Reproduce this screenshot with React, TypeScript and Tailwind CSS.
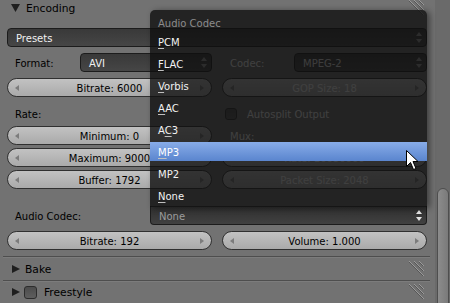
import React from 'react'

function ArrowL() {
  return (
    <svg width="4" height="6" viewBox="0 0 4 6" className="shrink-0">
      <path d="M4 0L0 3L4 6Z" fill="#7c7c7c" />
    </svg>
  )
}

function ArrowR() {
  return (
    <svg width="4" height="6" viewBox="0 0 4 6" className="shrink-0">
      <path d="M0 0L4 3L0 6Z" fill="#7c7c7c" />
    </svg>
  )
}

function UpDown({ color }: { color: string }) {
  return (
    <svg width="6" height="11" viewBox="0 0 6 11" className="shrink-0">
      <path d="M3 0L6 4H0Z M0 7H6L3 11Z" fill={color} />
    </svg>
  )
}

function TriDown() {
  return (
    <svg width="9" height="8" viewBox="0 0 9 8" className="shrink-0">
      <path d="M0 0H9L4.5 8Z" fill="#1f1f1f" />
    </svg>
  )
}

function TriRight() {
  return (
    <svg width="8" height="8" viewBox="0 0 8 8" className="shrink-0">
      <path d="M0 0L8 4L0 8Z" fill="#1f1f1f" />
    </svg>
  )
}

// panel drag handle
function Hatch() {
  return (
    <svg width="16" height="16" viewBox="0 0 16 16" className="ml-auto mr-[2px] shrink-0">
      <g strokeWidth="1">
        <path d="M0 0L15 15M5 0L15 10M10 0L15 5" stroke="#9a9a9a" />
        <path d="M0 1L14 15M5 1L14 10M10 1L14 5" stroke="#565656" />
      </g>
    </svg>
  )
}

function Slider({ text, light }: { text: string; light?: boolean }) {
  return (
    <div className="flex h-[19px] items-center rounded-full border border-[#303030] bg-gradient-to-b from-[#c2c2c2] to-[#aaaaaa] px-[7px]">
      <ArrowL />
      <span className={`flex-1 pt-[3px] text-center ${light ? 'text-white' : 'text-black'}`}>{text}</span>
      <ArrowR />
    </div>
  )
}

function Dropdown({ text }: { text: string }) {
  return (
    <div className="flex h-[19px] flex-1 items-center rounded-[4px] border border-[#1c1c1c] bg-gradient-to-b from-[#393939] to-[#464646] pl-[8px] pr-[4px] text-[#f0f0f0]">
      <span className="flex-1 pt-[3px]">{text}</span>
      <UpDown color="#a0a0a0" />
    </div>
  )
}

function Label({ text, light }: { text: string; light?: boolean }) {
  return (
    <div className={`flex h-[19px] items-center pl-[8px] ${light ? 'text-white' : 'text-black'}`}>
      <span className="pt-[3px]">{text}</span>
    </div>
  )
}

const codecs: [string, number][] = [
  ['PCM', 0],
  ['FLAC', 0],
  ['Vorbis', 0],
  ['AAC', 0],
  ['AC3', 1],
  ['MP3', 0],
  ['MP2', -1],
  ['None', 0],
]

export default function App() {
  return (
    <div className="relative flex h-[303px] w-[450px] overflow-hidden bg-[#727272] font-['DejaVu_Sans',sans-serif] text-[10px] leading-none text-black">
      <div className="flex w-[435px] flex-col pl-[7px]">
        {/* Encoding header */}
        <div className="-mt-[3px] flex h-[22px] w-[420px] items-center text-[10.7px]">
          <span className="ml-[4px]"><TriDown /></span>
          <span className="ml-[6px] pt-[3px]">Encoding</span>
          <Hatch />
        </div>

        <div className="mt-[10px] flex w-[420px]">
          <Dropdown text="Presets" />
        </div>

        <div className="mt-[6px] flex w-[420px] gap-[10px]">
          <div className="flex w-[205px] items-center">
            <div className="w-[73px]"><Label text="Format:" /></div>
            <Dropdown text="AVI" />
          </div>
          <div className="flex w-[205px] items-center">
            <div className="w-[72px]"><Label text="Codec:" light /></div>
            <Dropdown text="MPEG-2" />
          </div>
        </div>

        <div className="mt-[6px] flex w-[420px] gap-[10px]">
          <div className="w-[205px]"><Slider text="Bitrate: 6000" /></div>
          <div className="w-[205px]"><Slider text="GOP Size: 18" light /></div>
        </div>

        <div className="mt-[7px] flex w-[420px] gap-[10px]">
          <div className="w-[205px]"><Label text="Rate:" /></div>
          <div className="flex h-[19px] w-[205px] items-center pl-[3px]">
            <div className="h-[12px] w-[12px] rounded-[3px] border border-[#303030] bg-gradient-to-b from-[#4e4e4e] to-[#5c5c5c]" />
            <span className="ml-[10px] pt-[3px] text-white">Autosplit Output</span>
          </div>
        </div>

        <div className="mt-[3px] flex w-[420px] gap-[10px]">
          <div className="w-[205px]"><Slider text="Minimum: 0" /></div>
          <div className="w-[205px]"><Label text="Mux:" light /></div>
        </div>

        <div className="mt-[3px] flex w-[420px] gap-[10px]">
          <div className="w-[205px]"><Slider text="Maximum: 9000" /></div>
          <div className="w-[205px]"><Slider text="Rate: 10080000" light /></div>
        </div>

        <div className="mt-[3px] flex w-[420px] gap-[10px]">
          <div className="w-[205px]"><Slider text="Buffer: 1792" /></div>
          <div className="w-[205px]"><Slider text="Packet Size: 2048" light /></div>
        </div>

        {/* Audio codec */}
        <div className="mt-[17px] flex w-[420px] items-center">
          <div className="w-[143px]"><Label text="Audio Codec:" /></div>
          <div className="flex h-[19px] flex-1 items-center rounded-b-[4px] border border-t-0 border-[#1c1c1c] bg-gradient-to-b from-[#2e2e2e] to-[#414141] pl-[8px] pr-[4px] text-[#9c9c9c]">
            <span className="flex-1 pt-[3px]">None</span>
            <UpDown color="#e4e4e4" />
          </div>
        </div>

        <div className="mt-[6px] flex w-[420px] gap-[10px]">
          <div className="w-[205px]"><Slider text="Bitrate: 192" /></div>
          <div className="w-[205px]"><Slider text="Volume: 1.000" /></div>
        </div>

        {/* collapsed panels */}
        <div className="-ml-[4px] mt-[6px] w-[427px] border-t border-[#4e4e4e] border-b border-b-[#7c7c7c]" />
        <div className="flex h-[22px] w-[420px] items-center text-[10.7px]">
          <span className="ml-[5px]"><TriRight /></span>
          <span className="ml-[5px] pt-[3px]">Bake</span>
          <Hatch />
        </div>
        <div className="-ml-[4px] w-[427px] border-t border-[#4e4e4e] border-b border-b-[#7c7c7c]" />
        <div className="flex h-[22px] w-[420px] items-center text-[10.7px]">
          <span className="ml-[5px]"><TriRight /></span>
          <div className="ml-[4px] h-[13px] w-[13px] rounded-[3px] border border-[#2c2c2c] bg-gradient-to-b from-[#4c4c4c] to-[#5e5e5e]" />
          <span className="ml-[7px] pt-[3px]">Freestyle</span>
          <Hatch />
        </div>
      </div>

      {/* scrollbar */}
      <div className="flex-1 bg-[#6a6a6a] pl-[2px] pt-[188px]">
        <div className="h-[130px] w-[12px] rounded-t-full border border-[#4e4e4e] bg-gradient-to-r from-[#8c8c8c] to-[#7a7a7a]" />
      </div>

      {/* open menu */}
      <div className="absolute left-[150px] top-[10px] flex h-[197px] w-[277px] flex-col rounded-t-[5px] bg-[rgba(15,15,15,0.8)] pt-[3px] shadow-[3px_1px_6px_rgba(0,0,0,0.45)]">
        <div className="flex h-[19px] items-center pl-[8px] text-[#8c8c8c]">
          <span className="pt-[3px]">Audio Codec</span>
        </div>
        {codecs.map(([name, u]) => {
          const active = name === 'MP3'
          return (
            <div key={name} className="h-[22px] shrink-0 pt-[1px]">
              <div
                className={`flex h-[19px] items-center pl-[8px] ${
                  active ? 'bg-gradient-to-b from-[#88ace8] to-[#5a85ce] text-white' : 'text-[#f2f2f2]'
                }`}
              >
                {u < 0 ? (
                  <span className="pt-[3px]">{name}</span>
                ) : (
                  <span className="pt-[3px]">
                    {name.slice(0, u)}
                    <span className="underline decoration-[#c0c0c0] underline-offset-[2px]">{name[u]}</span>
                    {name.slice(u + 1)}
                  </span>
                )}
              </div>
            </div>
          )
        })}
      </div>

      {/* mouse pointer */}
      <svg width="13" height="21" viewBox="0 0 13 21" className="absolute left-[406px] top-[150px]">
        <path d="M0.5 0.5V16.5L4.5 12.5L7.5 19.5L10 18.5L7 11.5H12Z" fill="#ffffff" stroke="#000000" strokeWidth="1" />
      </svg>
    </div>
  )
}
